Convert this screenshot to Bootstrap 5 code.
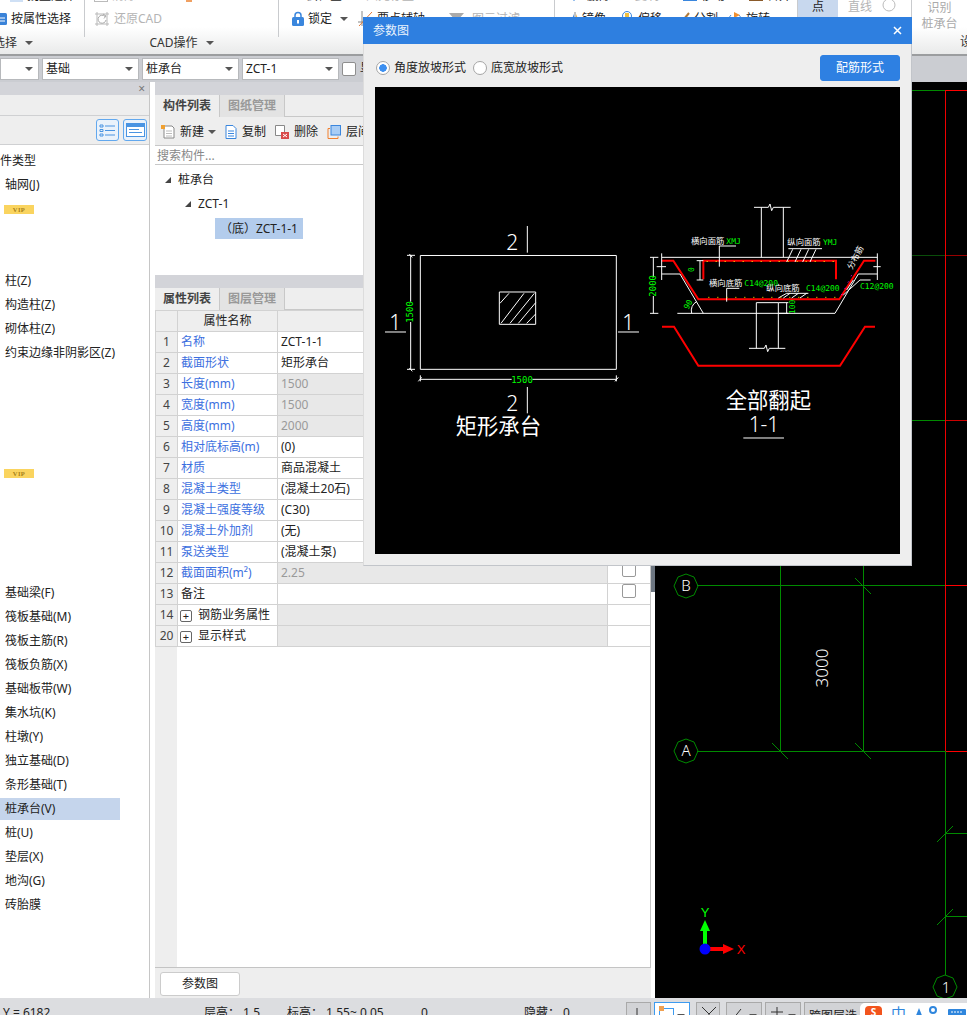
<!DOCTYPE html>
<html lang="zh">
<head>
<meta charset="utf-8">
<title>参数图</title>
<link href="https://cdn.jsdelivr.net/npm/bootstrap@5.3.0/dist/css/bootstrap.min.css" rel="stylesheet">
<style>
html,body{height:1015px;overflow:hidden;margin:0}
body{font:12px/20px "Noto Sans","Noto Sans CJK SC",sans-serif;color:#222;background:#eee;position:relative}
svg{display:block;flex:none}
.caret-dn{width:0;height:0;border-left:4px solid transparent;border-right:4px solid transparent;border-top:4px solid #555;flex:none}
/* ribbon */
.ribbon{height:56px;background:linear-gradient(#fff 50%,#e9eaea);border-bottom:2px solid #9b9d9f;overflow:hidden}
.grp{height:53px;margin-top:-16px;border-right:1px solid #c9cbce;flex:none}
.grp-a{width:85px}.grp-b{width:194px}.grp-c{width:276px}.grp-d{width:243px}.grp-e{width:114px}.grp-f{width:55px;border-right:0}
.rrow{height:23px;white-space:nowrap}
.rlabel{height:25px;color:#333}
.dim{color:#b4b4b4}
.in-a{margin-left:-5px}.in-a2{margin-left:10px}.lab-a{margin-left:-7px}
.in-b{padding-left:9px}.in-c{padding-left:13px}.in-d{padding-left:14px}
.sp-l{margin-left:8px}.sp-m{margin-left:10px}.sp-x{margin-left:24px}.sp-y{margin-left:14px}
.pt-btn{width:40px;height:53px;background:#c8d8ee;text-align:center;padding-top:13px}
.pt-txt{margin-left:10px;padding-top:13px}
.shaped{margin-left:10px;margin-top:14px}
.recog{width:100%;color:#aaa;text-align:center;line-height:16px;padding-top:16px}
.rb-foot{text-align:right;margin-top:0;margin-right:-5px;color:#333}
/* selector bar */
.selbar{height:26px;background:#cbcdd2;padding:2px 0 2px 0}
.sel{height:22px;width:97px;background:#fff;border:1px solid #b7b9bc;margin-right:3px;padding:0 5px 0 3px;flex:none;line-height:20px}
.sel-first{width:39px}
.fake-chk{width:14px;height:14px;background:#fff;border:1px solid #8e8e8e;border-radius:2px;flex:none}
/* panels */
.workarea{height:916px}
.pleft{width:150px;flex:none;border-right:1px solid #c6c6c6;background:#fff}
.strip{height:13px;background:#d3d4d9;position:relative;flex:none}
.strip-x{position:absolute;right:4px;top:0;font-size:12px;line-height:14px;color:#777}
.lhead{height:21px;background:#eee;border-bottom:1px solid #cfd0d2;flex:none}
.ltool{height:29px;background:#eee;border-bottom:1px solid #cfd0d2;padding-right:2px;gap:4px;flex:none}
.icbtn{width:23px;height:22px;padding:0;border:1px solid #62a8ee;border-radius:3px;background:#eaf2fb;display:flex;align-items:center;justify-content:center}
.icbtn-w{width:24px}
.ltree{padding-top:4px}
.litem{height:24px;line-height:24px;padding-left:5px;width:120px;white-space:nowrap}
.litem-cut{margin-left:-17px;padding-left:5px;width:137px}
.litem-sel{background:#c5d5ec;height:22px;line-height:22px;margin:1px 0}
.vip{width:30px;height:9px;position:relative;top:8px;margin-left:-1px;background:#fad45f;color:#a57f18;font:bold 6.5px/9px "Liberation Serif",serif;text-align:center;letter-spacing:.4px}
.gap-col{width:5px;background:#fff;flex:none}
.pmid{width:496px;flex:none;background:#eee}
.tabsrow{height:22px;flex:none;background:#eee;border-bottom:1px solid #c8c8c8;padding-left:0}
.tabsrow .nav-link{height:22px;padding:0 8px;line-height:21px;color:#999;font-weight:700;background:#e3e3e3;border:0;border-right:1px solid #c8c8c8;border-radius:0}
.tabsrow .nav-link.active{color:#444;background:#eee}
.mtool{height:28px;flex:none;background:#eee;padding:2px 0 0 6px}
.mtool span{margin-left:5px}
.tool-first{margin-left:9px}
.tool-gap{margin-left:9px}
.msearch{height:20px;background:#fff;border-top:1px solid #c8c8c8;border-bottom:1px solid #c8c8c8;color:#888;padding:1px 0 0 2px;line-height:18px;flex:none}
.mtree{height:110px;background:#fff;padding-top:3px;flex:none}
.tnode{height:24px;line-height:24px;white-space:nowrap}
.tn0{padding-left:10px}.tn1{padding-left:30px}.tn2{padding-left:60px}
.tri{width:0;height:0;border-bottom:6px solid #444;border-left:6px solid transparent;margin-right:7px;flex:none}
.tsel{background:#b3ccec;height:21px;line-height:21px;width:88px;padding:0 0 0 5px}
.proplist{flex:1 1 auto;background:#fff;border-bottom:1px solid #c4c4c4;border-right:1px solid #c4c4c4;position:relative;overflow:hidden}
.rowhead-bg{position:absolute;left:0;top:0;bottom:0;width:22px;background:#eee}
table.ptable{table-layout:fixed;width:495px;margin:0;position:relative;border-color:#d2d2d2;--bs-table-bg:transparent}
.ptable td,.ptable th{height:21px;padding:0 3px;line-height:20px;font-size:12px;font-weight:400;white-space:nowrap;overflow:hidden;color:#222;background:#fff}
.ptable .cn{background:#eee;text-align:center;padding:0;color:#444}
.ptable .th{background:#eee;text-align:center}
.ptable .nm{color:#3c6fe0}
.ptable .ro{background:#e8e8e8;color:#9a9a9a}
.ptable .chk{padding:0}
.c1{width:22px}.c2{width:100px}.c3{width:330px}.c4{width:43px}
.chkbox{width:14px;height:14px;border:1px solid #999;border-radius:2px;background:#fff;margin:0 auto}
.plus{display:inline-flex;width:12px;height:12px;border:1px solid #666;border-radius:2px;margin-right:6px;margin-left:-1px;vertical-align:-1px;align-items:center;justify-content:center;line-height:10px;font-size:11px;background:#fff}
.pfoot{height:30px;padding:4px 0 2px 5px;flex:none;background:#eee}
.btn-param{width:80px;height:24px;padding:0;font-size:12px;line-height:22px;background:#fff;border:1px solid #ccc;border-radius:3px;color:#222}
.scrollcol{width:4px;flex:none;background:#fff;position:relative;border-left:0}
.scrollthumb{position:absolute;left:0;top:0;width:4px;height:510px;background:#6d7681}
.pcanvas{flex:1 1 auto;background:#000;min-width:0}
.pcanvas svg{width:312px;height:916px}
/* status */
.statusbar{height:17px;background:#dcdde0;position:relative;overflow:hidden;white-space:nowrap}
.st-y{margin-left:3px;width:201px;padding-top:5px}
.st-a{width:83px;padding-top:5px}.st-b{width:134px;padding-top:5px}.st-c{width:103px;padding-top:5px}.st-d{width:102px;padding-top:5px}
.sbtn{height:26px;margin-top:4px;margin-right:3px;background:#d2d3d6;border:1px solid #a9a9a9;flex:none;display:flex;padding:3px 4px;justify-content:space-between}
.sb1{width:25px}.sb2{width:36px;background:#fff;border-color:#3d9bf0}.sb3{width:24px;margin-left:3px}.sb4{width:36px;margin-left:3px}.sb5{width:36px}.sb6{width:73px}
.ime{position:absolute;right:0;bottom:0;width:107px;height:12px;background:#fff;border-radius:5px 0 0 0;padding:3px 0 0 5px;gap:9px;overflow:hidden;align-items:flex-start}
.ime-logo{width:17px;height:16px;border-radius:4px;background:#f2541d;color:#fff;font-size:10px;line-height:13px;text-align:center;font-weight:700}
.ime-zh{color:#2f86dd;font-size:15px;line-height:15px}
/* dialog */
.dlg{position:absolute;left:363px;top:17px;width:549px;height:549px;background:#eee;border:1px solid #c2c5ca;border-top:0;border-left-color:#dcdcdc}
.dlg-title{height:27px;margin:0 -1px 0 -1px;background:#2e7fe0;color:#eaf3fd;padding:0 10px 0 10px;line-height:27px}
.dlg-x{stroke:#fff;stroke-width:1.5}
.dlg-opts{height:43px;padding:4px 11px 0 12px}
.radio-item{margin-right:7px}
.rd{width:14px;height:14px;margin:0 4px 0 0;float:none;background-color:#fff;border:1px solid #a5a5a5;flex:none}
.rd:checked{background-color:#fff;border-color:#a5a5a5;background-image:radial-gradient(circle,#3c8ff0 0 3.5px,transparent 4px)}
.btn-peijin{width:80px;height:26px;padding:0;font-size:12px;line-height:24px;background:#2e80e2;border-color:#2e80e2;border-radius:3px;color:#fff}
.dlg-draw{margin:0 11px;background:#000;height:467px;width:525px}
.dlg-draw svg{width:525px;height:467px}
.st{stroke:#fff;stroke-width:3;fill:none}
.rs{stroke:#f00;stroke-width:6;fill:none}
.gt{fill:#0f0;font-family:"DejaVu Sans Mono","Liberation Mono",monospace}
.wt{fill:#fff;font-family:"Noto Sans CJK SC",sans-serif}
.nt{fill:#fff;font-family:"Noto Sans","Noto Sans CJK SC",sans-serif;font-weight:300}
.cad{stroke:#008a00;fill:none}
</style>
</head>
<body>

<header class="ribbon d-flex">
  <div class="grp grp-a">
    <div class="rrow d-flex align-items-center in-a2"><svg width="13" height="13" class="me-1"><rect width="13" height="13" fill="#cfe0f5"/></svg>批量选择</div>
    <div class="rrow d-flex align-items-center in-a"><svg width="12" height="14" class="me-1"><rect x="0" y="1" width="12" height="12" rx="1.5" fill="#3a83d8"/><path d="M2 6h8M2 9h8" stroke="#fff"/></svg>按属性选择</div>
    <div class="rlabel d-flex align-items-center lab-a"><span>选择</span><i class="caret-dn ms-2"></i></div>
  </div>
  <div class="grp grp-b">
    <div class="rrow d-flex align-items-center in-b dim"><svg width="14" height="13" class="me-1"><rect x=".5" y=".5" width="13" height="12" fill="none" stroke="#bbb"/></svg>清除CAD<svg width="10" height="12" class="sp-x"><rect x="2" y="4" width="6" height="8" fill="#f0a062"/></svg></div>
    <div class="rrow d-flex align-items-center in-b dim"><svg width="16" height="16" class="me-1"><path d="M3 1v14M13 1v14M1 3h14M1 13h14" stroke="#b9b9b9" fill="none"/><path d="M11 5.500A4 4 0 1 0 12 9" stroke="#aaa" fill="none"/><path d="M9 3l3 2-2 2.500" fill="none" stroke="#aaa"/></svg>还原CAD</div>
    <div class="rlabel d-flex align-items-center justify-content-center"><span>CAD操作</span><i class="caret-dn ms-2"></i></div>
  </div>
  <div class="grp grp-c">
    <div class="rrow d-flex align-items-center in-c"><span class="sp-y">云检查</span><span class="dim sp-x">图元存盘</span></div>
    <div class="rrow d-flex align-items-center in-c">
      <svg width="12" height="15" class="me-1"><path d="M3 7V4.500a3 3 0 0 1 6 0V7" fill="none" stroke="#3a86dd" stroke-width="1.5"/><rect y="6" width="12" height="9" rx="1.5" fill="#3a86dd"/><rect x="5" y="9" width="2" height="3.500" fill="#fff"/></svg>
      <span>锁定</span><i class="caret-dn sp-l"></i>
      <svg width="15" height="15" class="sp-m"><path d="M4 0v15M0 11h15" stroke="#888" fill="none"/><path d="M1 15L14 1" stroke="#e07a3a"/></svg>
      <span class="ms-1">要点辅轴</span>
      <svg width="15" height="14" class="sp-x"><path d="M0 1h15L9 8v6H6V8z" fill="#aaa"/></svg>
      <span class="dim sp-l">图元过滤</span>
    </div>
    <div class="rlabel"></div>
  </div>
  <div class="grp grp-d">
    <div class="rrow d-flex align-items-center in-d"><svg width="10" height="10" class="me-1"><path d="M5 0l5 5-5 5-5-5z" fill="#3a86dd"/></svg><span class="ms-1">删除</span><span class="dim sp-x">复制</span><svg width="14" height="10" class="sp-x"><rect width="14" height="10" fill="#3a86dd"/></svg><span class="ms-1">移动</span><svg width="14" height="10" class="sp-x"><rect y="5" width="14" height="5" fill="#8a5a2a"/></svg><span class="ms-1">合并</span></div>
    <div class="rrow d-flex align-items-center in-d">
      <svg width="13" height="14"><path d="M6 0v14" stroke="#888"/><path d="M0 14L5 2v12z" fill="#3a86dd"/><path d="M7 14V2l5 12z" fill="#f0b040"/></svg><span>镜像</span>
      <svg width="14" height="15" class="sp-y"><circle cx="7" cy="5" r="4.500" fill="none" stroke="#3a86dd"/><rect x="5" y="2" width="4" height="7" fill="#f0c040"/></svg><span class="ms-1">偏移</span>
      <svg width="18" height="14" class="sp-m"><path d="M0 12h10" stroke="#444"/><path d="M8 12L17 1" stroke="#b07a3a" stroke-width="2"/></svg><span class="ms-1">分割</span>
      <svg width="14" height="14" class="sp-m"><path d="M3 3a6 6 0 1 0 8 0" fill="none" stroke="#3a86dd"/><path d="M6 0l6 3-6 3z" fill="#f09030"/></svg><span class="ms-1">旋转</span>
    </div>
    <div class="rlabel"></div>
  </div>
  <div class="grp grp-e d-flex align-items-start">
    <div class="pt-btn">点</div>
    <div class="pt-txt dim">直线</div>
    <svg width="14" height="14" class="shaped"><circle cx="7" cy="7" r="6" fill="none" stroke="#bbb"/></svg>
  </div>
  <div class="grp grp-f">
    <div class="recog">识别<br>桩承台</div>
    <div class="rb-foot">设</div>
  </div>
</header>

<div class="selbar d-flex align-items-start">
  <div class="sel sel-first d-flex align-items-center justify-content-end"><i class="caret-dn"></i></div>
  <div class="sel d-flex align-items-center justify-content-between"><span>基础</span><i class="caret-dn"></i></div>
  <div class="sel d-flex align-items-center justify-content-between"><span>桩承台</span><i class="caret-dn"></i></div>
  <div class="sel d-flex align-items-center justify-content-between"><span>ZCT-1</span><i class="caret-dn"></i></div>
  <div class="fake-chk mt-1"></div><span class="ms-1">显示</span>
</div>

<main class="workarea d-flex">
  <aside class="pleft d-flex flex-column">
    <div class="strip"><span class="strip-x">×</span></div>
    <div class="lhead"></div>
    <div class="ltool d-flex align-items-center justify-content-end">
      <button class="icbtn" type="button"><svg width="17" height="13"><path d="M1 1h3v2H1zM1 5.500h3v2H1zM1 10h3v2H1z" fill="none" stroke="#4a94e2"/><path d="M6 2h10M6 6.500h10M6 11h10" stroke="#4a94e2"/></svg></button>
      <button class="icbtn icbtn-w" type="button"><svg width="19" height="14"><rect x=".5" y=".5" width="18" height="13" fill="#fff" stroke="#4a94e2"/><rect x=".5" y=".5" width="18" height="3.500" fill="#4a94e2"/><path d="M3 6.500h10M3 9.500h13" stroke="#4a94e2"/></svg></button>
    </div>
    <div class="ltree">
      <div class="litem litem-cut">构件类型</div>
      <div class="litem">轴网(J)</div>
      <div class="litem"><div class="vip">VIP</div></div>
      <div class="litem"></div>
      <div class="litem"></div>
      <div class="litem">柱(Z)</div>
      <div class="litem">构造柱(Z)</div>
      <div class="litem">砌体柱(Z)</div>
      <div class="litem">约束边缘非阴影区(Z)</div>
      <div class="litem"></div><div class="litem"></div><div class="litem"></div><div class="litem"></div>
      <div class="litem"><div class="vip">VIP</div></div>
      <div class="litem"></div><div class="litem"></div><div class="litem"></div><div class="litem"></div>
      <div class="litem">基础梁(F)</div>
      <div class="litem">筏板基础(M)</div>
      <div class="litem">筏板主筋(R)</div>
      <div class="litem">筏板负筋(X)</div>
      <div class="litem">基础板带(W)</div>
      <div class="litem">集水坑(K)</div>
      <div class="litem">柱墩(Y)</div>
      <div class="litem">独立基础(D)</div>
      <div class="litem">条形基础(T)</div>
      <div class="litem litem-sel">桩承台(V)</div>
      <div class="litem">桩(U)</div>
      <div class="litem">垫层(X)</div>
      <div class="litem">地沟(G)</div>
      <div class="litem">砖胎膜</div>
    </div>
  </aside>
  <div class="gap-col"></div>
  <section class="pmid d-flex flex-column">
    <div class="strip"></div>
    <ul class="nav tabsrow">
      <li class="nav-item"><a class="nav-link active" href="#">构件列表</a></li>
      <li class="nav-item"><a class="nav-link" href="#">图纸管理</a></li>
    </ul>
    <div class="mtool d-flex align-items-center">
      <svg width="14" height="14"><path d="M3 1h8l2 2v10H3z" fill="#fff" stroke="#888"/><path d="M5 6h6M5 8.500h6M5 11h6" stroke="#bbb"/><rect width="4" height="4" fill="#f0a030"/></svg>
      <span>新建</span><i class="caret-dn ms-1"></i>
      <svg width="12" height="14" class="tool-first"><path d="M1 .5h7l3 3v10H1z" fill="#fff" stroke="#3a86dd"/><path d="M3 6h6M3 8.500h6M3 11h6" stroke="#3a86dd"/></svg>
      <span>复制</span>
      <svg width="14" height="14" class="tool-gap"><path d="M.5.500h9v10h-9z" fill="#fff" stroke="#888"/><rect x="6" y="7" width="8" height="7" fill="#d94a4a"/><path d="M8 9l4 3M12 9l-4 3" stroke="#fff"/></svg>
      <span>删除</span>
      <svg width="14" height="14" class="tool-gap"><rect x="4" y=".5" width="9.500" height="9.500" fill="#a9cdf5" stroke="#3a86dd"/><path d="M3 3.500H1v10h10v-2" fill="none" stroke="#f08030"/></svg>
      <span>层间复制</span>
    </div>
    <div class="msearch">搜索构件...</div>
    <div class="mtree">
      <div class="tnode tn0 d-flex align-items-center"><i class="tri"></i>桩承台</div>
      <div class="tnode tn1 d-flex align-items-center"><i class="tri"></i>ZCT-1</div>
      <div class="tnode tn2 d-flex align-items-center"><div class="tsel">（底）ZCT-1-1</div></div>
    </div>
    <div class="strip"></div>
    <ul class="nav tabsrow">
      <li class="nav-item"><a class="nav-link active" href="#">属性列表</a></li>
      <li class="nav-item"><a class="nav-link" href="#">图层管理</a></li>
    </ul>
    <div class="proplist">
      <div class="rowhead-bg"></div>
      <table class="table table-bordered ptable">
        <colgroup><col class="c1"><col class="c2"><col class="c3"><col class="c4"></colgroup>
        <thead><tr><th class="th"></th><th class="th">属性名称</th><th class="th">属性值</th><th class="th">附加</th></tr></thead>
        <tbody>
          <tr><td class="cn">1</td><td class="nm">名称</td><td>ZCT-1-1</td><td class="chk"></td></tr>
          <tr><td class="cn">2</td><td class="nm">截面形状</td><td>矩形承台</td><td class="chk"><div class="chkbox"></div></td></tr>
          <tr><td class="cn">3</td><td class="nm">长度(mm)</td><td class="ro">1500</td><td class="chk"><div class="chkbox"></div></td></tr>
          <tr><td class="cn">4</td><td class="nm">宽度(mm)</td><td class="ro">1500</td><td class="chk"><div class="chkbox"></div></td></tr>
          <tr><td class="cn">5</td><td class="nm">高度(mm)</td><td class="ro">2000</td><td class="chk"><div class="chkbox"></div></td></tr>
          <tr><td class="cn">6</td><td class="nm">相对底标高(m)</td><td>(0)</td><td class="chk"><div class="chkbox"></div></td></tr>
          <tr><td class="cn">7</td><td class="nm">材质</td><td>商品混凝土</td><td class="chk"><div class="chkbox"></div></td></tr>
          <tr><td class="cn">8</td><td class="nm">混凝土类型</td><td>(混凝土20石)</td><td class="chk"><div class="chkbox"></div></td></tr>
          <tr><td class="cn">9</td><td class="nm">混凝土强度等级</td><td>(C30)</td><td class="chk"><div class="chkbox"></div></td></tr>
          <tr><td class="cn">10</td><td class="nm">混凝土外加剂</td><td>(无)</td><td class="chk"><div class="chkbox"></div></td></tr>
          <tr><td class="cn">11</td><td class="nm">泵送类型</td><td>(混凝土泵)</td><td class="chk"><div class="chkbox"></div></td></tr>
          <tr><td class="cn">12</td><td class="nm">截面面积(m²)</td><td class="ro">2.25</td><td class="chk"><div class="chkbox"></div></td></tr>
          <tr><td class="cn">13</td><td>备注</td><td></td><td class="chk"><div class="chkbox"></div></td></tr>
          <tr><td class="cn">14</td><td><span class="plus">+</span>钢筋业务属性</td><td class="ro"></td><td class="chk"></td></tr>
          <tr><td class="cn">20</td><td><span class="plus">+</span>显示样式</td><td class="ro"></td><td class="chk"></td></tr>
        </tbody>
      </table>
    </div>
    <div class="pfoot"><button type="button" class="btn btn-param">参数图</button></div>
  </section>
  <div class="scrollcol"><div class="scrollthumb"></div></div>
  <div class="pcanvas">
    <svg viewBox="655 82 312 916" aria-label="绘图区">
      <g stroke-width="1">
        <path class="cad" d="M912 90.500h33"/>
        <path d="M912 255.500h33" stroke="#0a4d0a"/>
        <path class="cad" d="M912 420.500h33"/>
        <path stroke="#f00" d="M945 90.500h22"/>
        <path stroke="#900" d="M945 255.500h22"/>
        <path stroke="#c00" d="M945 420.500h22"/>
        <path stroke="#e00" d="M945.500 90v661"/>
        <path stroke="#f00" d="M945 585.500h22M945 751.500h22"/>
        <path class="cad" d="M780.500 560v191M863.500 560v191"/>
        <path class="cad" d="M697 585.500h248M697 751.500h248"/>
        <path class="cad" d="M855 578l16 16M772 743l16 16M855 743l16 16"/>
        <path class="cad" d="M945.500 751v224"/>
        <path class="cad" d="M937 842l16-16M937 925l16-16M945 833.500h22M945 916.500h22"/>
        <polygon class="cad" points="686,574 694,577 698,586 694,595 686,598 678,595 674,586 678,577"/>
        <polygon class="cad" points="686,739 694,742 698,751 694,760 686,763 678,760 674,751 678,742"/>
        <polygon class="cad" points="945,975 953,978 957,987 953,996 945,999 937,996 933,987 937,978"/>
      </g>
      <text x="686" y="591" text-anchor="middle" class="nt" font-size="15">B</text>
      <text x="686" y="756" text-anchor="middle" class="nt" font-size="15">A</text>
      <text x="946" y="993" text-anchor="middle" class="nt" font-size="15">1</text>
      <text transform="translate(828 668) rotate(-90)" text-anchor="middle" class="nt" font-size="17">3000</text>
      <path d="M705 949v-20" stroke="#0f0" stroke-width="4"/><path d="M705 920l5 11h-10z" fill="#0f0"/>
      <path d="M705 949h23" stroke="#f00" stroke-width="4"/><path d="M734 949l-11 5v-10z" fill="#f00"/>
      <circle cx="705" cy="949" r="5.500" fill="#00f"/>
      <text x="705" y="917" text-anchor="middle" fill="#0f0" font-size="13" font-family="Liberation Sans">Y</text>
      <text x="741" y="954" text-anchor="middle" fill="#f00" font-size="13" font-family="Liberation Sans">X</text>
    </svg>
  </div>
</main>

<footer class="statusbar d-flex">
  <span class="st-y">Y = 6182</span>
  <span class="st-a">层高： 1.5</span>
  <span class="st-b">标高： 1.55~ 0.05</span>
  <span class="st-c">0</span>
  <span class="st-d">隐藏： 0</span>
  <div class="sbtn sb1"><svg width="12" height="14"><path d="M6 2v12" stroke="#333"/></svg></div>
  <div class="sbtn sb2"><svg width="16" height="14"><rect x=".5" y="2.500" width="14" height="12" fill="none" stroke="#3d9bf0"/><rect width="5" height="5" fill="#f0a050"/></svg><i class="caret-dn mt-2"></i></div>
  <div class="sbtn sb3"><svg width="16" height="14"><path d="M1 1l7 7 7-7M8 8v6" stroke="#333" fill="none"/></svg></div>
  <div class="sbtn sb4"><svg width="14" height="14"><path d="M2 13L10 3" stroke="#333"/></svg><i class="caret-dn mt-2"></i></div>
  <div class="sbtn sb5"><svg width="14" height="14"><path d="M7 1v12M1 6h12" stroke="#333"/></svg><i class="caret-dn mt-2"></i></div>
  <div class="sbtn sb6">跨图层选</div>
  <div class="ime d-flex">
    <div class="ime-logo">S</div>
    <div class="ime-zh">中</div>
    <svg width="24" height="14"><path d="M4 2l4 10H0z" fill="#2f86dd"/><circle cx="18" cy="4" r="3" fill="none" stroke="#2f86dd" stroke-width="2"/></svg>
    <svg width="18" height="14"><rect y="3" width="18" height="11" rx="1" fill="#2f86dd"/><path d="M3 6h12" stroke="#fff" stroke-dasharray="2 1"/></svg>
  </div>
</footer>

<div class="dlg" role="dialog" aria-label="参数图">
  <div class="dlg-title d-flex justify-content-between align-items-center"><span>参数图</span><svg width="9" height="9" class="dlg-x"><path d="M1 1l7 7M8 1l-7 7"/></svg></div>
  <div class="dlg-opts d-flex align-items-center">
    <label class="radio-item d-flex align-items-center"><input class="form-check-input rd" type="radio" name="slope" checked>角度放坡形式</label>
    <label class="radio-item d-flex align-items-center"><input class="form-check-input rd" type="radio" name="slope">底宽放坡形式</label>
    <button type="button" class="btn btn-primary btn-peijin ms-auto">配筋形式</button>
  </div>
  <div class="dlg-draw">
    <svg viewBox="375 87 525 467" aria-label="矩形承台参数图">
      <g transform="translate(375 190) scale(.33333)">
        <path class="st" d="M136 196.500H724V538H136z"/>
        <path class="st" d="M373 306H482V403H373z"/>
        <path class="st" stroke-width="2" d="M375 340L402 310M378 400L447 310M405 400L478 310M430 400L482 338M455 400L482 372"/>
        <path class="st" d="M457 108V188M457 591V670M30 426H93M729 426H792"/>
        <path class="st" d="M107 196V335M107 396V538M96 196H120M96 538H120M103 192L112 202M103 534L112 544"/>
        <path class="st" d="M136 568H410M472 568H724M136 556V574M724 556V574M130 574L140 562M720 574L730 562"/>
        <text x="412" y="181" text-anchor="middle" class="nt" font-size="63">2</text>
        <text x="412" y="664" text-anchor="middle" class="nt" font-size="63">2</text>
        <text x="61" y="421" text-anchor="middle" class="nt" font-size="63">1</text>
        <text x="760" y="421" text-anchor="middle" class="nt" font-size="63">1</text>
        <text transform="translate(113 366) rotate(-90)" text-anchor="middle" class="gt" font-size="27">1500</text>
        <text x="441" y="578" text-anchor="middle" class="gt" font-size="27">1500</text>
        <text x="370" y="731" text-anchor="middle" class="wt" font-size="64">矩形承台</text>
      </g>
      <g transform="translate(640 190) scale(.33333)">
        <path class="rs" d="M66 212H100L175 328H598L672 212H706"/>
        <path class="rs" d="M190 268V212H588V268"/>
        <path class="rs" d="M66 410H102L175 527H600L675 410H705"/>
        <path class="st" d="M66 202H712M364 52V202M430 52V202M342 52H385L390 42L395 62L400 52H452"/>
        <path class="st" d="M349 338V475M415 338V475M349 338H415M327 475H373L378 465L383 485L388 475H436"/>
        <path class="st" d="M112 370H585L655 252H712M65 252H120L190 370M65 190V270M712 190V270M50 230H78M700 230H722"/>
        <path class="st" d="M40 202V262M40 318V370M30 202H55M30 370H55M180 212V270M170 212H190M170 270H190"/>
        <path class="st" d="M155 370A30 30 0 0 1 170 335"/>
        <path class="st" d="M440 338V370M415 338H445M415 370H445"/>
        <path class="st" d="M238 230V168H288M445 176H546M440 216L458 178M465 216L483 178M488 216L506 178M510 216L528 178M260 335V295H298M415 324L440 310H505M430 324L450 310M455 324L475 310M480 324L500 310M610 315L660 270H692M620 300L640 270"/>
        <path d="M200 214.500H585M205 322H590" stroke="#ff0" stroke-width="3" stroke-dasharray="3 24"/>
        <path d="M605 315l30-60" stroke="#f0f" stroke-width="3" stroke-dasharray="3 18"/>
        <text x="153" y="163" class="wt" font-size="25">横向面筋</text><text x="259" y="163" class="gt" font-size="24">XMJ</text>
        <text x="442" y="165" class="wt" font-size="25">纵向面筋</text><text x="549" y="165" class="gt" font-size="24">YMJ</text>
        <text x="207" y="288" class="wt" font-size="25">横向底筋</text><text x="313" y="288" class="gt" font-size="24">C14@200</text>
        <text x="379" y="303" class="wt" font-size="25">纵向底筋</text><text x="498" y="303" class="gt" font-size="24">C14@200</text>
        <text x="660" y="296" class="gt" font-size="24">C12@200</text>
        <text transform="translate(636 240) rotate(-62)" class="wt" font-size="25">分布筋</text>
        <text transform="translate(49 320) rotate(-90)" class="gt" font-size="27">2000</text>
        <text transform="translate(162 246) rotate(-90)" class="gt" font-size="24">0</text>
        <text transform="translate(145 360) rotate(-62)" class="gt" font-size="24">90</text>
        <text transform="translate(464 372) rotate(-90)" class="gt" font-size="24">100</text>
        <text x="385" y="653" text-anchor="middle" class="wt" font-size="64">全部翻起</text>
        <text x="372" y="727" text-anchor="middle" class="nt" font-size="63">1-1</text>
        <path class="st" d="M310 744H432"/>
      </g>
    </svg>
  </div>
</div>
<script src="https://cdn.jsdelivr.net/npm/bootstrap@5.3.0/dist/js/bootstrap.bundle.min.js"></script>
</body>
</html>
